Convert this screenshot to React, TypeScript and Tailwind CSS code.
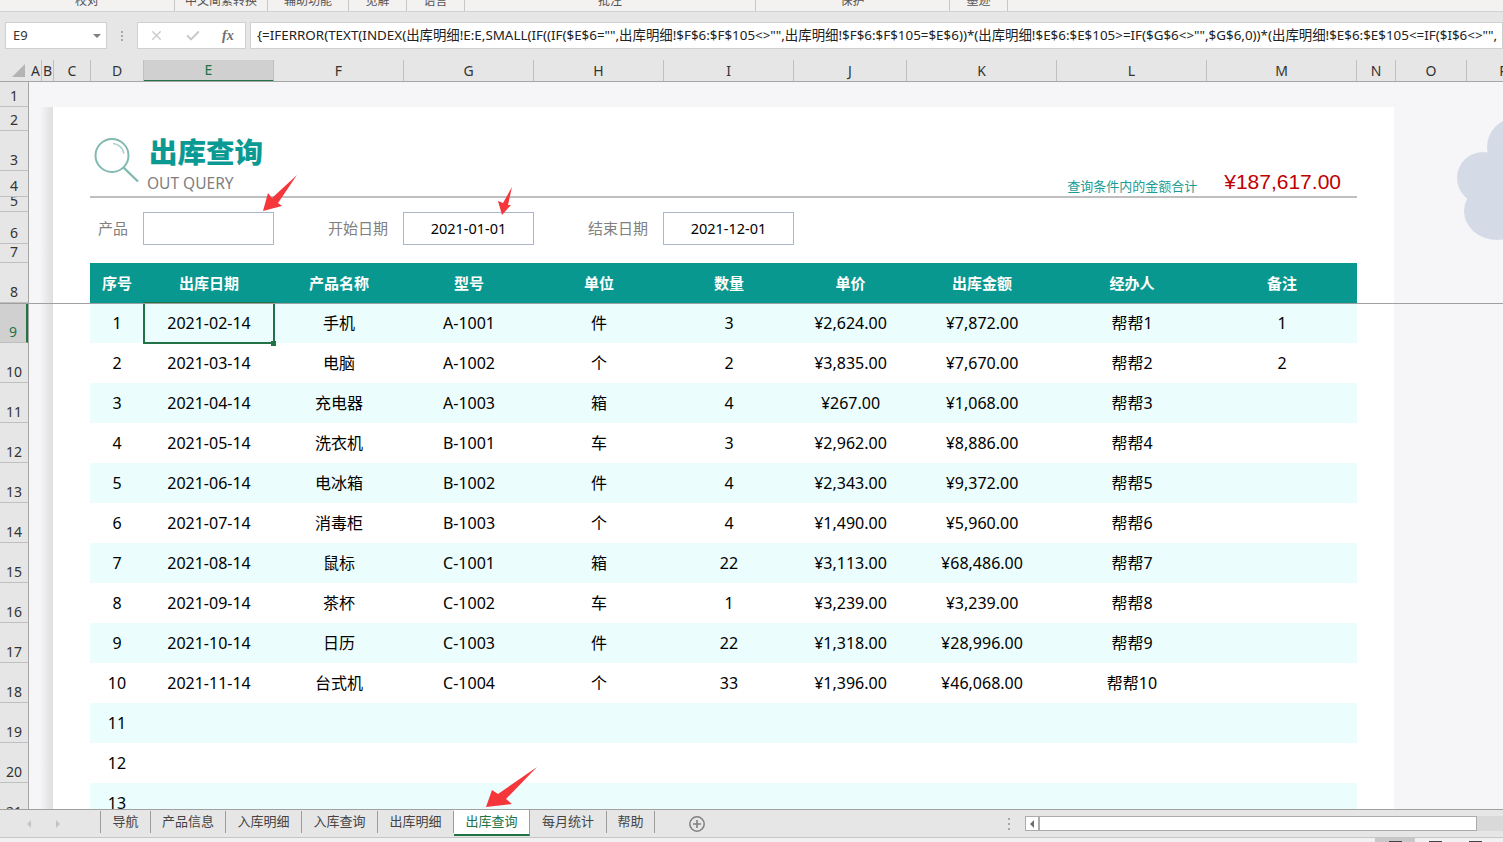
import React from "react";
import { X, Check } from "lucide-react";

const ribbon = [
  { label: "校对", w: "w-[175px]" },
  { label: "中文简繁转换", w: "w-[93px]" },
  { label: "辅助功能", w: "w-[81px]" },
  { label: "见解", w: "w-[58px]" },
  { label: "语言", w: "w-[58px]" },
  { label: "批注", w: "w-[291px]" },
  { label: "保护", w: "w-[194px]" },
  { label: "墨迹", w: "w-[58px]" },
];

const columns = [
  { name: "A", w: "w-[12px]" },
  { name: "B", w: "w-[12px]" },
  { name: "C", w: "w-[37px]" },
  { name: "D", w: "w-[53px]" },
  { name: "E", w: "w-[130px]" },
  { name: "F", w: "w-[130px]" },
  { name: "G", w: "w-[130px]" },
  { name: "H", w: "w-[130px]" },
  { name: "I", w: "w-[130px]" },
  { name: "J", w: "w-[113px]" },
  { name: "K", w: "w-[150px]" },
  { name: "L", w: "w-[150px]" },
  { name: "M", w: "w-[150px]" },
  { name: "N", w: "w-[39px]" },
  { name: "O", w: "w-[71px]" },
  { name: "P", w: "w-[74px]" },
];

const rowHeads = [
  { n: 1, h: "h-[25px]" },
  { n: 2, h: "h-[24px]" },
  { n: 3, h: "h-[40px]" },
  { n: 4, h: "h-[26px]" },
  { n: 5, h: "h-[15px]" },
  { n: 6, h: "h-[32px]" },
  { n: 7, h: "h-[19px]" },
  { n: 8, h: "h-[40px]" },
  { n: 9, h: "h-[40px]" },
  { n: 10, h: "h-[40px]" },
  { n: 11, h: "h-[40px]" },
  { n: 12, h: "h-[40px]" },
  { n: 13, h: "h-[40px]" },
  { n: 14, h: "h-[40px]" },
  { n: 15, h: "h-[40px]" },
  { n: 16, h: "h-[40px]" },
  { n: 17, h: "h-[40px]" },
  { n: 18, h: "h-[40px]" },
  { n: 19, h: "h-[40px]" },
  { n: 20, h: "h-[40px]" },
  { n: 21, h: "h-[40px]" },
];

const heads = ["序号", "出库日期", "产品名称", "型号", "单位", "数量", "单价", "出库金额", "经办人", "备注"];

// same order as heads
const cellW = [
  "w-[54px]",
  "w-[130px]",
  "w-[130px]",
  "w-[130px]",
  "w-[130px]",
  "w-[130px]",
  "w-[113px]",
  "w-[150px]",
  "w-[150px]",
  "w-[150px]",
];

const rows = [
  ["1", "2021-02-14", "手机", "A-1001", "件", "3", "¥2,624.00", "¥7,872.00", "帮帮1", "1"],
  ["2", "2021-03-14", "电脑", "A-1002", "个", "2", "¥3,835.00", "¥7,670.00", "帮帮2", "2"],
  ["3", "2021-04-14", "充电器", "A-1003", "箱", "4", "¥267.00", "¥1,068.00", "帮帮3", ""],
  ["4", "2021-05-14", "洗衣机", "B-1001", "车", "3", "¥2,962.00", "¥8,886.00", "帮帮4", ""],
  ["5", "2021-06-14", "电冰箱", "B-1002", "件", "4", "¥2,343.00", "¥9,372.00", "帮帮5", ""],
  ["6", "2021-07-14", "消毒柜", "B-1003", "个", "4", "¥1,490.00", "¥5,960.00", "帮帮6", ""],
  ["7", "2021-08-14", "鼠标", "C-1001", "箱", "22", "¥3,113.00", "¥68,486.00", "帮帮7", ""],
  ["8", "2021-09-14", "茶杯", "C-1002", "车", "1", "¥3,239.00", "¥3,239.00", "帮帮8", ""],
  ["9", "2021-10-14", "日历", "C-1003", "件", "22", "¥1,318.00", "¥28,996.00", "帮帮9", ""],
  ["10", "2021-11-14", "台式机", "C-1004", "个", "33", "¥1,396.00", "¥46,068.00", "帮帮10", ""],
  ["11", "", "", "", "", "", "", "", "", ""],
  ["12", "", "", "", "", "", "", "", "", ""],
  ["13", "", "", "", "", "", "", "", "", ""],
];

const tabs = [
  { label: "导航", w: "w-[50px]" },
  { label: "产品信息", w: "w-[75px]" },
  { label: "入库明细", w: "w-[76px]" },
  { label: "入库查询", w: "w-[76px]" },
  { label: "出库明细", w: "w-[76px]" },
  { label: "出库查询", w: "w-[76px]", active: true },
  { label: "每月统计", w: "w-[77px]" },
  { label: "帮助", w: "w-[48px]" },
];

const formula =
  '{=IFERROR(TEXT(INDEX(出库明细!E:E,SMALL(IF((IF($E$6="",出库明细!$F$6:$F$105<>"",出库明细!$F$6:$F$105=$E$6))*(出库明细!$E$6:$E$105>=IF($G$6<>"",$G$6,0))*(出库明细!$E$6:$E$105<=IF($I$6<>"",';

const RedArrow = ({ className, points, w, h }: { className: string; points: string; w: number; h: number }) => (
  <svg className={className} width={w} height={h} viewBox={`0 0 ${w} ${h}`}>
    <polygon points={points} fill="#f5373c" />
  </svg>
);

const App = () => {
  return (
    <div className="relative w-[1503px] h-[842px] overflow-hidden flex flex-col bg-[#e6e6e6] text-black font-['Noto_Sans','Noto_Sans_CJK_SC',sans-serif]">
      {/* ribbon, only the group labels are still visible */}
      <div className="flex h-[12px] shrink-0 bg-[#f3f2f1] border-b border-[#d2d2d2] overflow-hidden">
        {ribbon.map((r) => (
          <div key={r.label} className={`${r.w} h-[11px] border-r border-[#c8c8c8] flex justify-center overflow-hidden`}>
            <span className="text-[12px] leading-[14px] -mt-[6px] text-[#555555]">{r.label}</span>
          </div>
        ))}
      </div>

      {/* formula bar */}
      <div className="flex items-start h-[48px] shrink-0 pl-[5px] pt-[10px]">
        <div className="w-[102px] h-[27px] bg-white border border-[#d0d0d0] flex items-center justify-between pl-[7px] pr-[5px]">
          <span className="text-[13px] text-[#333333]">E9</span>
          <span className="border-x-[4px] border-t-[4px] border-x-transparent border-t-[#808080]" />
        </div>
        <div className="w-[30px] h-[27px] flex flex-col items-center justify-center gap-[2px]">
          <span className="w-[2px] h-[2px] bg-[#a8a8a8]" />
          <span className="w-[2px] h-[2px] bg-[#a8a8a8]" />
          <span className="w-[2px] h-[2px] bg-[#a8a8a8]" />
        </div>
        <div className="w-[109px] h-[27px] bg-white border border-[#d0d0d0] flex items-center pl-[11px]">
          <X size={15} strokeWidth={2.2} className="text-[#c8c8c8]" />
          <Check size={16} strokeWidth={3} className="text-[#c8c8c8] ml-[21px]" />
          <span className="ml-[21px] text-[14px] font-bold italic text-[#6e6e6e] font-['Liberation_Serif',serif]">fx</span>
        </div>
        <div className="ml-[4px] flex-1 min-w-0 h-[27px] bg-white border border-[#d0d0d0] flex items-center pl-[6px] overflow-hidden">
          <span className="text-[13.4px] whitespace-nowrap text-[#222222]">{formula}</span>
        </div>
      </div>

      {/* column letters */}
      <div className="flex h-[22px] shrink-0 border-b border-[#a6a6a6] overflow-hidden">
        <div className="w-[30px] shrink-0 flex justify-end items-end pr-[5px] pb-[4px]">
          <div className="border-l-[13px] border-b-[13px] border-l-transparent border-b-[#b4b4b4]" />
        </div>
        {columns.map((c) => (
          <div
            key={c.name}
            className={`${c.w} shrink-0 flex items-center justify-center pb-[1px] text-[14px] border-r border-[#c0c0c0] ${
              c.name === "E"
                ? "bg-[#d0d0d0] text-[#217346] border-b-2 border-b-[#217346] -mb-[1px]"
                : "text-[#333333]"
            }`}
          >
            {c.name}
          </div>
        ))}
      </div>

      {/* sheet */}
      <div className="flex flex-1 min-h-0 overflow-hidden">
        <div className="w-[29px] shrink-0 border-r border-[#a6a6a6] flex flex-col">
          {rowHeads.map((r) => (
            <div
              key={r.n}
              className={`${r.h} shrink-0 flex items-end justify-center overflow-hidden border-b border-[#c0c0c0] text-[14px] leading-[20px] ${
                r.n === 9 ? "bg-[#d0d0d0] text-[#217346] border-r-2 border-r-[#217346]" : "text-[#333333]"
              }`}
            >
              {r.n}
            </div>
          ))}
        </div>

        <div className="flex-1 min-w-0 flex flex-col bg-[#f6f6f9]">
          <div className="h-[25px] shrink-0" />
          <div className="flex flex-1 min-h-0">
            <div className="w-[24px] shrink-0 pl-[11px]">
              <div className="h-full bg-gradient-to-r from-[#f6f6f9] to-[#dedede]" />
            </div>

            <div className="w-[1341px] shrink-0 bg-white pl-[37px] pr-[37px] overflow-hidden">
              {/* title */}
              <div className="h-[91px] border-b-2 border-[#bfbfbf] flex justify-between items-end">
                <div className="flex items-end">
                  <svg className="ml-[4px] mb-[13px]" width="46" height="46" viewBox="0 0 46 46" fill="none">
                    <circle cx="18" cy="18.5" r="16.5" stroke="#82b9b1" strokeWidth="2" />
                    <path d="M19 6.5a12 12 0 0 1 11 10" stroke="#a9d0ca" strokeWidth="1.6" />
                    <path d="M29.5 30.5 L44 44.5" stroke="#82b9b1" strokeWidth="2.4" />
                  </svg>
                  <div className="ml-[7px] flex flex-col">
                    <span className="ml-[2px] -mb-[1px] text-[28.5px] leading-[38px] font-black text-[#0a9a93]">出库查询</span>
                    <span className="text-[15.5px] leading-[22px] mt-[2px] mb-[2px] text-[#7f7f7f]">OUT QUERY</span>
                  </div>
                </div>
                <div className="flex items-end gap-[27px] pr-[16px]">
                  <span className="text-[13px] leading-[18px] mb-[1px] text-[#1a9c96]">查询条件内的金额合计</span>
                  <span className="text-[21px] leading-[28px] text-[#c00000] font-['Liberation_Sans',sans-serif]">¥187,617.00</span>
                </div>
              </div>

              {/* filters */}
              <div className="flex mt-[14px] h-[33px] text-[15px] text-[#808080]">
                <div className="w-[38px] text-right leading-[33px]">产品</div>
                <div className="ml-[15px] w-[131px] border border-[#a9b7c9]" />
                <div className="w-[114px] text-right leading-[33px]">开始日期</div>
                <div className="ml-[15px] w-[131px] border border-[#a9b7c9] flex items-center justify-center text-[14.5px] text-black">2021-01-01</div>
                <div className="w-[114px] text-right leading-[33px]">结束日期</div>
                <div className="ml-[15px] w-[131px] border border-[#a9b7c9] flex items-center justify-center text-[14.5px] text-black">2021-12-01</div>
              </div>

              {/* table */}
              <div className="mt-[18px] flex h-[40px] bg-[#099890]">
                {heads.map((h, i) => (
                  <div key={h} className={`${cellW[i]} shrink-0 flex items-center justify-center text-[15px] font-bold text-white`}>
                    {h}
                  </div>
                ))}
              </div>
              {rows.map((row, ri) => (
                <div key={row[0]} className={`flex h-[40px] ${ri % 2 === 0 ? "bg-[#ebfdfc]" : "bg-white"}`}>
                  {row.map((v, ci) => (
                    <div
                      key={ci}
                      className={`${cellW[ci]} shrink-0 relative flex items-center justify-center text-[16px] ${
                        ri === 0 && ci === 1 ? "outline-2 -outline-offset-1 outline-[#217346]" : ""
                      } ${ci === 2 || ci === 4 || ci === 8 ? "text-[15px]" : ""}`}
                    >
                      {v}
                      {ri === 0 && ci === 1 && (
                        <span className="absolute -right-[2px] -bottom-[3px] w-[5px] h-[5px] bg-[#217346]" />
                      )}
                    </div>
                  ))}
                </div>
              ))}
            </div>

            <div className="flex-1 min-w-0" />
          </div>
        </div>
      </div>

      {/* sheet tabs */}
      <div className="flex items-stretch h-[29px] shrink-0 border-t border-[#a0a0a0] border-b border-b-[#c6c6c6]">
        <div className="w-[100px] shrink-0 flex items-center pl-[27px] gap-[25px]">
          <span className="border-y-[4px] border-r-[4px] border-y-transparent border-r-[#c4c4c4]" />
          <span className="border-y-[4px] border-l-[4px] border-y-transparent border-l-[#c4c4c4]" />
        </div>
        <div className="flex border-l border-[#9c9c9c] h-[22px] mt-[1px]">
          {tabs.map((t) => (
            <div
              key={t.label}
              className={`${t.w} shrink-0 flex items-center justify-center text-[13px] border-r border-[#9c9c9c] ${
                t.active ? "bg-white text-[#217346] h-[26px] -mt-[1px] border-b-2 border-b-[#217346]" : "text-[#444444]"
              }`}
            >
              {t.label}
            </div>
          ))}
        </div>
        <div className="ml-[33px] flex items-center">
          <svg width="18" height="18" viewBox="0 0 18 18" fill="none">
            <circle cx="9" cy="9" r="7.2" stroke="#808080" strokeWidth="1.5" />
            <path d="M5 9h8M9 5v8" stroke="#808080" strokeWidth="1.6" />
          </svg>
        </div>
        <div className="ml-[302px] w-[2px] flex flex-col justify-center gap-[3px]">
          <span className="w-[2px] h-[2px] bg-[#a8a8a8]" />
          <span className="w-[2px] h-[2px] bg-[#a8a8a8]" />
          <span className="w-[2px] h-[2px] bg-[#a8a8a8]" />
        </div>
        <div className="ml-[15px] flex-1 h-[15px] mt-[6px] flex bg-[#d9d9d9]">
          <div className="w-[452px] flex bg-white border border-[#ababab]">
            <div className="w-[14px] flex items-center justify-center border-r-2 border-[#ababab]">
              <span className="border-y-[4px] border-r-[4px] border-y-transparent border-r-[#6e6e6e]" />
            </div>
          </div>
        </div>
      </div>

      {/* status bar, cut off by the window */}
      <div className="h-[4px] shrink-0 bg-[#f1f1f1] flex pl-[1375px]">
        <div className="w-[40px] bg-[#c8c8c8] flex justify-center items-end">
          <span className="w-[13px] h-[1px] bg-[#444444]" />
        </div>
        <div className="w-[40px] flex justify-center items-end">
          <span className="w-[13px] h-[1px] bg-[#444444]" />
        </div>
        <div className="w-[40px] flex justify-center items-end">
          <span className="w-[13px] h-[1px] bg-[#444444]" />
        </div>
      </div>

      {/* freeze pane line */}
      <div className="absolute left-0 right-0 top-[303px] h-[1px] bg-[#a0a0a0]" />

      {/* cloud decoration in the right margin */}
      <svg className="absolute left-[1450px] top-[110px]" width="53" height="135" viewBox="0 0 53 135" fill="#d5dbe6">
        <circle cx="66" cy="37" r="29" />
        <circle cx="33" cy="68" r="26" />
        <ellipse cx="47" cy="101" rx="33" ry="29" />
        <rect x="38" y="45" width="15" height="50" />
      </svg>

      {/* red arrows */}
      <RedArrow className="absolute left-[262px] top-[174px]" w={36} h={38} points="1,37 6,19 10,24 35,1 16,29 20,32" />
      <RedArrow className="absolute left-[497px] top-[186px]" w={16} h={30} points="5,29 1,15 6,17 15,1 11,19 14,19" />
      <RedArrow className="absolute left-[485px] top-[766px]" w={53} h={42} points="1,41 7,24 13,28 52,1 21,33 27,38" />
    </div>
  );
};

export default App;
